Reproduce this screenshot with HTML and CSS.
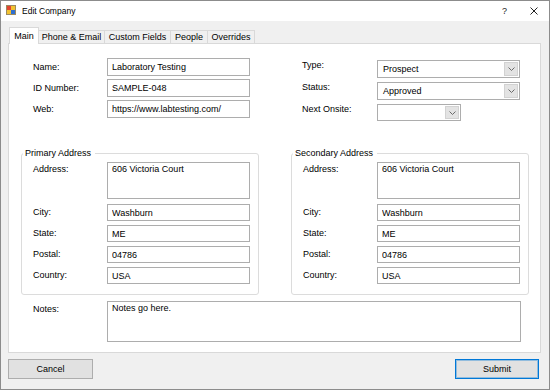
FILE: index.html
```html
<!DOCTYPE html>
<html>
<head>
<meta charset="utf-8">
<title>Edit Company</title>
<link rel="stylesheet" href="styles.css">
</head>
<body>
<div class="window">
  <div class="titlebar">
    <svg class="app-icon" width="10" height="10" viewBox="0 0 10 10">
      <rect x="0" y="0" width="10" height="10" fill="#f2c230"/>
      <rect x="0" y="0" width="5" height="5" fill="#e2452f"/>
      <rect x="5" y="5" width="5" height="5" fill="#2f6fd0"/>
      <rect x="0.5" y="0.5" width="9" height="9" fill="none" stroke="#9a8a60" stroke-width="1"/>
    </svg>
    <span class="title">Edit Company</span>
    <span class="help">?</span>
    <svg class="close" width="8" height="8" viewBox="0 0 8 8">
      <path d="M0.5 0.5 L7.5 7.5 M7.5 0.5 L0.5 7.5" stroke="#222" stroke-width="1" fill="none"/>
    </svg>
  </div>
  <div class="body">
    <div class="tabs">
      <div class="tab active tab-main">Main</div>
      <div class="tab tab-phone">Phone &amp; Email</div>
      <div class="tab tab-custom">Custom Fields</div>
      <div class="tab tab-people">People</div>
      <div class="tab tab-over">Overrides</div>
    </div>
    <div class="panel">
      <div class="top">
        <div class="col col-left">
          <div class="row"><span class="label">Name:</span><input class="input" value="Laboratory Testing" readonly></div>
          <div class="row"><span class="label">ID Number:</span><input class="input" value="SAMPLE-048" readonly></div>
          <div class="row"><span class="label">Web:</span><input class="input" value="https://www.labtesting.com/" readonly></div>
        </div>
        <div class="col col-right">
          <div class="row"><span class="label">Type:</span>
            <div class="combo"><span class="combo-value">Prospect</span><span class="combo-btn"><svg width="7" height="4" viewBox="0 0 7 4"><path d="M0.5 0.5 L3.5 3.5 L6.5 0.5" stroke="#6a6a6a" fill="none"/></svg></span></div>
          </div>
          <div class="row"><span class="label">Status:</span>
            <div class="combo"><span class="combo-value">Approved</span><span class="combo-btn"><svg width="7" height="4" viewBox="0 0 7 4"><path d="M0.5 0.5 L3.5 3.5 L6.5 0.5" stroke="#6a6a6a" fill="none"/></svg></span></div>
          </div>
          <div class="row"><span class="label">Next Onsite:</span>
            <div class="combo combo-short"><span class="combo-value"></span><span class="combo-btn"><svg width="7" height="4" viewBox="0 0 7 4"><path d="M0.5 0.5 L3.5 3.5 L6.5 0.5" stroke="#6a6a6a" fill="none"/></svg></span></div>
          </div>
        </div>
      </div>
      <div class="groups">
        <fieldset class="group">
          <legend>Primary Address</legend>
          <div class="grows">
            <div class="row row-tall"><span class="label">Address:</span><textarea class="input area" readonly>606 Victoria Court</textarea></div>
            <div class="row row-s"><span class="label">City:</span><input class="input" value="Washburn" readonly></div>
            <div class="row row-s"><span class="label">State:</span><input class="input" value="ME" readonly></div>
            <div class="row row-s"><span class="label">Postal:</span><input class="input" value="04786" readonly></div>
            <div class="row row-s"><span class="label">Country:</span><input class="input" value="USA" readonly></div>
          </div>
        </fieldset>
        <fieldset class="group">
          <legend>Secondary Address</legend>
          <div class="grows">
            <div class="row row-tall"><span class="label">Address:</span><textarea class="input area" readonly>606 Victoria Court</textarea></div>
            <div class="row row-s"><span class="label">City:</span><input class="input" value="Washburn" readonly></div>
            <div class="row row-s"><span class="label">State:</span><input class="input" value="ME" readonly></div>
            <div class="row row-s"><span class="label">Postal:</span><input class="input" value="04786" readonly></div>
            <div class="row row-s"><span class="label">Country:</span><input class="input" value="USA" readonly></div>
          </div>
        </fieldset>
      </div>
      <div class="notes-row">
        <span class="label">Notes:</span>
        <textarea class="input notes" readonly>Notes go here.</textarea>
      </div>
    </div>
    <div class="buttons">
      <button class="btn">Cancel</button>
      <button class="btn btn-primary">Submit</button>
    </div>
  </div>
</div>
</body>
</html>
```

FILE: styles.css
```css
* { box-sizing: border-box; }
html, body { margin: 0; padding: 0; }
body {
  font-family: "Liberation Sans", Arial, sans-serif;
  font-size: 9px;
  color: #000;
  background: #fff;
}
.window {
  width: 550px;
  height: 390px;
  border: 1px solid #8c8c8c;
  display: flex;
  flex-direction: column;
  background: #f0f0f0;
}
.titlebar {
  height: 20px;
  background: #fff;
  display: flex;
  align-items: center;
  padding-left: 5px;
  flex: none;
}
.app-icon { margin-top: -3px; flex: none; }
.title { margin-left: 6px; font-size: 8.5px; color: #000; margin-top: -1px; }
.help { margin-left: auto; margin-right: 23px; font-size: 9px; color: #222; margin-top: -1px; }
.close { margin-right: 11px; margin-top: -1px; }

.body {
  flex: 1;
  display: flex;
  flex-direction: column;
  padding: 6px 8px 10px 7px;
}
.tabs {
  display: flex;
  align-items: flex-end;
  height: 16px;
  padding-left: 1px;
  position: relative;
  z-index: 1;
  flex: none;
}
.tab {
  height: 13px;
  line-height: 12px;
  padding: 0;
  text-align: center;
  border: 1px solid #d9d9d9;
  border-bottom: none;
  background: #f0f0f0;
  margin-left: -1px;
  white-space: nowrap;
  flex: none;
}
.tab:first-child { margin-left: 0; }
.tab.active {
  height: 17px;
  line-height: 15px;
  padding-top: 1px;
  background: #fff;
  margin-bottom: -1px;
}
.tab-main { width: 30px; }
.tab-phone { width: 67px; }
.tab-custom { width: 67px; }
.tab-people { width: 38px; }
.tab-over { width: 48px; }
.panel {
  height: 310px;
  flex: none;
  border: 1px solid #d9d9d9;
  background: #fff;
  padding: 14px 11px 0 12px;
  display: flex;
  flex-direction: column;
}
.top {
  display: grid;
  grid-template-columns: 238px 238px;
  column-gap: 32px;
}
.col { display: flex; flex-direction: column; }
.col-left { gap: 3px; padding-left: 12px; }
.col-right { gap: 4px; padding-left: 11px; margin-top: 2px; }
.row { display: flex; align-items: center; height: 18px; }
.label { width: 74px; flex: none; line-height: 11px; white-space: nowrap; }
.col-right .row { align-items: flex-start; }
.col-right .label { width: 75px; margin-top: 0; }
.input {
  width: 143px;
  height: 18px;
  border: 1px solid #adadad;
  padding: 0 4px;
  font: inherit;
  color: #000;
  background: #fff;
  outline: none;
  margin: 0;
}
.combo {
  width: 143px;
  height: 18px;
  border: 1px solid #adadad;
  background: #fff;
  display: flex;
  align-items: center;
  padding: 1px 1px 1px 5px;
}
.combo-short { width: 84px; height: 17px; }
.combo-value { flex: 1; }
.combo-btn {
  width: 14px;
  height: 100%;
  background: #e3e3e3;
  border: 1px solid #d2d2d2;
  display: flex;
  align-items: center;
  justify-content: center;
}
.groups {
  display: grid;
  grid-template-columns: 238px 238px;
  column-gap: 32px;
  margin-top: 26px;
}
.group {
  margin: 0;
  min-width: 0;
  border: 1px solid #dcdcdc;
  border-radius: 3px;
  padding: 3px 8px 10px 11px;
}
.group legend {
  line-height: 11px;
  padding: 0 4px 0 2px;
  margin-left: -10px;
}
.grows { display: flex; flex-direction: column; gap: 4px; }
.row-s { height: 17px; }
.row-s .input { height: 17px; }
.row-tall { height: 37px; align-items: flex-start; margin-bottom: 1px; }
.row-tall .label { margin-top: 2px; }
.area, .notes {
  resize: none;
  padding: 1px 4px;
  line-height: 11px;
  overflow: hidden;
}
.area { height: 37px; }
.notes-row {
  display: flex;
  align-items: flex-start;
  margin-top: 6px;
  padding-left: 12px;
}
.notes-row .label { margin-top: 3px; }
.notes { width: 414px; height: 41px; }
.buttons {
  display: flex;
  justify-content: space-between;
  margin-top: 6px;
  padding-right: 2px;
  flex: none;
}
.btn {
  width: 85px;
  height: 20px;
  border: 1px solid #adadad;
  background: #e1e1e1;
  font: inherit;
  color: #000;
  padding: 0;
  margin: 0;
}
.btn-primary {
  width: 84px;
  border-color: #0078d7;
  box-shadow: inset 0 0 0 1px rgba(0, 120, 215, 0.35);
}
```
